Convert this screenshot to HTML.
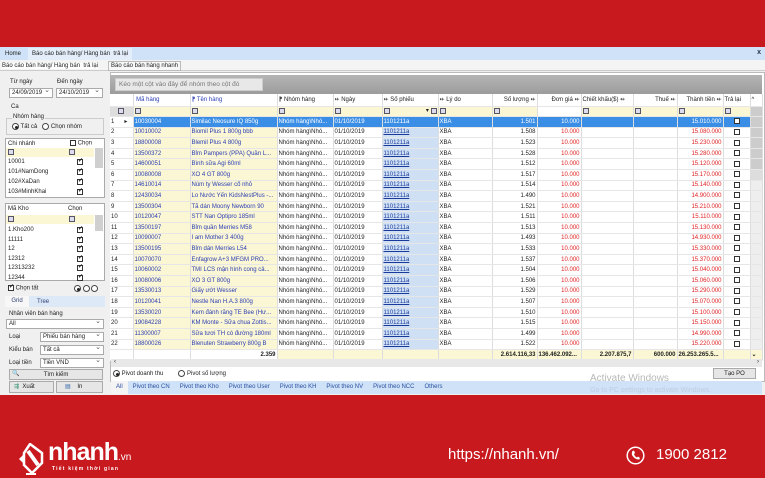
<!DOCTYPE html>
<html><head><meta charset="utf-8"><style>
*{margin:0;padding:0;box-sizing:border-box}
body{width:765px;height:478px;background:#c8191f;position:relative;overflow:hidden;font-family:"Liberation Sans",sans-serif;font-size:6px;color:#222}
.a{position:absolute}
#app{position:absolute;left:0;top:47px;width:765px;height:348px;background:#f0f0f0}
.tab1{position:absolute;top:0;left:0;width:765px;height:13px;background:#cfe2f7}
.t{position:absolute;white-space:nowrap}
.box{position:absolute;background:#fff;border:1px solid #aaa}
.sel{position:absolute;background:#fff;border:1px solid #aaa;height:10px;padding-left:2px;line-height:8px}
.sel:after{content:"⌄";position:absolute;right:2px;top:-2px;font-size:7px;color:#555}
.cb{display:inline-block;width:6px;height:6px;border:1px solid #333;background:#fff;position:relative;vertical-align:middle}
.cb.k:after{content:"✓";position:absolute;left:0;top:-3px;font-size:6px;font-weight:bold}
.pa{position:absolute!important}
.rd{display:inline-block;width:7px;height:7px;border:1px solid #444;border-radius:50%;background:#fff;vertical-align:middle;position:relative}
.rd.on:after{content:"";position:absolute;left:1.5px;top:1.5px;width:3px;height:3px;border-radius:50%;background:#222}
table{border-collapse:collapse;table-layout:fixed}
#g{position:absolute;left:110px;top:47px}
#g td{height:10.6px;max-height:10.6px;border-right:1px solid #ddd;border-bottom:1px solid #e6e6e6;padding:0 1px;white-space:nowrap;overflow:hidden;line-height:8px;font-size:6px}
#g tr.r td{background:#fff}
#g td.y{background:#fbf7d4!important;color:#2a3cb5}
#g td.b{background:#cfe0f5!important;color:#1a3a9a;text-decoration:underline}
#g td.n{text-align:right}
#g td.red{text-align:right;color:#e02020}
#g tr.s td{background:#3a8ee6!important;color:#fff!important;text-decoration:none}
#g tr.s td.w{background:#fff!important;color:#222!important}
.fi{display:inline-block;width:6px;height:6px;border:1px solid #556;background:#dde;vertical-align:middle}
.bt{position:absolute;background:#e6e6e6;border:1px solid #aaa;text-align:center;line-height:10px}
</style></head><body>
<div id="app">
<div class="tab1"><span class="t" style="left:5px;top:4px">Home</span><span class="t" style="left:28px;top:1px;height:12px;background:#e4eefa;padding:3px 4px">Báo cáo bán hàng/ Hàng bán &nbsp;trả lại</span><span class="t" style="right:4px;top:2px;font-weight:bold;font-size:7px;color:#234">x</span></div>
<div class="a" style="left:0;top:13px;width:765px;height:11px;background:#f4f4f4;border-bottom:1px solid #ccc"></div>
<span class="t" style="left:2px;top:16px;background:#fff">Báo cáo bán hàng/ Hàng bán &nbsp;trả lại</span>
<span class="t" style="left:108px;top:14px;border:1px solid #bbb;padding:1px 2px;background:#f8f8f8">Báo cáo bán hàng nhanh</span>
<!-- left panel -->
<span class="t" style="left:10px;top:32px">Từ ngày</span><span class="t" style="left:57px;top:32px">Đến ngày</span>
<div class="sel" style="left:9px;top:41px;width:44px">24/09/2019</div>
<div class="sel" style="left:56px;top:41px;width:47px">24/10/2019</div>
<span class="t" style="left:11px;top:57px">Ca</span>
<div class="a" style="left:6px;top:71px;width:98px;height:17px;border:1px solid #ccc"></div>
<span class="t" style="left:12px;top:67px;background:#f0f0f0;padding:0 1px">Nhóm hàng</span>
<span class="t" style="left:12px;top:76px"><span class="rd on"></span> Tất cả &nbsp;&nbsp;<span class="rd"></span> Chọn nhóm</span>
<div class="box" style="left:5px;top:91px;width:100px;height:60px"></div>
<span class="t" style="left:8px;top:94px">Chi nhánh</span><span class="t" style="left:70px;top:93px"><span class="cb"></span> Chọn</span>
<div class="a" style="left:6px;top:101px;width:88px;height:9px;background:#fbf7d4"><span class="fi" style="position:absolute;left:2px;top:1px"></span><span class="fi" style="position:absolute;left:63px;top:1px"></span></div>
<div class="a" style="left:95px;top:101px;width:8px;height:20px;background:#cfcfcf"></div>
<span class="t" style="left:8px;top:112px">10001</span><span class="cb k pa" style="left:77px;top:112px"></span>
<span class="t" style="left:8px;top:122px">101#NamDong</span><span class="cb k pa" style="left:77px;top:122px"></span>
<span class="t" style="left:8px;top:132px">102#XaDan</span><span class="cb k pa" style="left:77px;top:132px"></span>
<span class="t" style="left:8px;top:142px">103#MinhKhai</span><span class="cb k pa" style="left:77px;top:142px"></span>
<div class="box" style="left:5px;top:156px;width:100px;height:78px"></div>
<span class="t" style="left:8px;top:159px">Mã Kho</span><span class="t" style="left:68px;top:159px">Chọn</span>
<div class="a" style="left:6px;top:168px;width:88px;height:9px;background:#fbf7d4"><span class="fi" style="position:absolute;left:2px;top:1px"></span><span class="fi" style="position:absolute;left:63px;top:1px"></span></div>
<div class="a" style="left:95px;top:168px;width:8px;height:16px;background:#cfcfcf"></div>
<span class="t" style="left:8px;top:180px">1.Kho200</span><span class="cb k pa" style="left:77px;top:180px"></span>
<span class="t" style="left:8px;top:190px">11111</span><span class="cb k pa" style="left:77px;top:190px"></span>
<span class="t" style="left:8px;top:199px">12</span><span class="cb k pa" style="left:77px;top:199px"></span>
<span class="t" style="left:8px;top:209px">12312</span><span class="cb k pa" style="left:77px;top:209px"></span>
<span class="t" style="left:8px;top:218px">12313232</span><span class="cb k pa" style="left:77px;top:218px"></span>
<span class="t" style="left:8px;top:228px">12344</span><span class="cb k pa" style="left:77px;top:228px"></span>
<span class="t" style="left:8px;top:238px"><span class="cb k"></span> Chọn tất</span>
<span class="t" style="left:74px;top:238px"><span class="rd on"></span> <span class="rd"></span> <span class="rd"></span></span>
<div class="a" style="left:5px;top:249px;width:100px;height:11px;background:#dde9f7"></div>
<span class="t" style="left:5px;top:249px;width:24px;height:11px;background:#f7f7f7;text-align:center;line-height:11px;color:#347">Grid</span>
<span class="t" style="left:37px;top:252px;color:#347">Tree</span>
<span class="t" style="left:9px;top:264px">Nhân viên bán hàng</span>
<div class="sel" style="left:6px;top:272px;width:98px">All</div>
<span class="t" style="left:9px;top:287px">Loại</span><div class="sel" style="left:40px;top:285px;width:64px">Phiếu bán hàng</div>
<span class="t" style="left:9px;top:300px">Kiểu bán</span><div class="sel" style="left:40px;top:298px;width:64px">Tất cả</div>
<span class="t" style="left:9px;top:313px">Loại tiền</span><div class="sel" style="left:40px;top:311px;width:64px">Tiền VND</div>
<div class="bt" style="left:9px;top:322px;width:94px;height:11px">Tìm kiếm</div>
<span class="t" style="left:12px;top:323px;color:#2a6">🔍</span>
<div class="bt" style="left:9px;top:334px;width:45px;height:12px;text-align:left;padding-left:4px"><span style="color:#286">⇶</span> &nbsp;Xuất</div>
<div class="bt" style="left:56px;top:334px;width:47px;height:12px;text-align:left;padding-left:8px"><span style="color:#36a">▤</span> &nbsp;&nbsp;&nbsp;In</div>
<!-- grid area -->
<div class="a" style="left:110px;top:25px;width:655px;height:310px;background:#fff;border:1px solid #bbb"></div>
<div class="a" style="left:110px;top:28px;width:652px;height:19px;background:linear-gradient(#b5b5b5,#9c9c9c)"></div>
<div class="a" style="left:115px;top:31px;width:148px;height:13px;background:#e8e8e8;border:1px solid #ccc;line-height:11px;padding-left:3px;color:#777;font-size:6.5px">Kéo một cột vào đây để nhóm theo cột đó</div>
<table id="g" style="width:652px">
<colgroup><col style="width:23px"><col style="width:57px"><col style="width:87px"><col style="width:56px"><col style="width:49px"><col style="width:56px"><col style="width:54px"><col style="width:45px"><col style="width:44px"><col style="width:52px"><col style="width:44px"><col style="width:46px"><col style="width:27px"><col style="width:12px"></colgroup>
<tr style="background:#fff"><td style="height:12px"></td><td style="color:#2a3cb5">&nbsp;Mã hàng</td><td style="color:#2a3cb5">⁋ Tên hàng</td><td>⁋ Nhóm hàng</td><td>⇷ Ngày</td><td>⇷ Số phiếu</td><td>⇷ Lý do</td><td class="n">Số lượng ⇷</td><td class="n">Đơn giá ⇷</td><td>Chiết khấu($) ⇷</td><td class="n">Thuế ⇷</td><td class="n">Thành tiền ⇷</td><td>Trả lại</td><td>^</td></tr>
<tr style="background:#fbf7d4"><td style="background:#ddd;text-align:center"><span class="fi"></span></td><td><span class="fi"></span></td><td><span class="fi"></span></td><td><span class="fi"></span></td><td><span class="fi"></span></td><td><span class="fi"></span> <span style="float:right">▾ <span class="fi"></span></span></td><td><span class="fi"></span></td><td><span class="fi"></span></td><td style="background:#fff"></td><td><span class="fi"></span></td><td><span class="fi"></span></td><td><span class="fi"></span></td><td><span class="fi"></span></td><td style="background:#ccc"></td></tr>
<tr class="r s"><td class="w">1 &nbsp;&nbsp;&nbsp;&nbsp;&nbsp;▸</td><td class="y">10030004</td><td class="y">Similac Neosure IQ 850g</td><td>Nhóm hàng\Nhó...</td><td>01/10/2019</td><td class="b">1101211a</td><td>XBA</td><td class="n">1.501</td><td class="red">10.000</td><td></td><td></td><td class="red">15.010.000</td><td style="text-align:center"><span class="cb"></span></td><td style="background:#ccc!important"></td></tr>
<tr class="r"><td>2</td><td class="y">10010002</td><td class="y">Biomil Plus 1 800g bbb</td><td>Nhóm hàng\Nhó...</td><td>01/10/2019</td><td class="b">1101211a</td><td>XBA</td><td class="n">1.508</td><td class="red">10.000</td><td></td><td></td><td class="red">15.080.000</td><td style="text-align:center"><span class="cb"></span></td><td style="background:#ccc!important"></td></tr>
<tr class="r"><td>3</td><td class="y">18800008</td><td class="y">Blemil Plus 4 800g</td><td>Nhóm hàng\Nhó...</td><td>01/10/2019</td><td class="b">1101211a</td><td>XBA</td><td class="n">1.523</td><td class="red">10.000</td><td></td><td></td><td class="red">15.230.000</td><td style="text-align:center"><span class="cb"></span></td><td style="background:#ccc!important"></td></tr>
<tr class="r"><td>4</td><td class="y">13500372</td><td class="y">Bỉm Pampers (PPA) Quần L...</td><td>Nhóm hàng\Nhó...</td><td>01/10/2019</td><td class="b">1101211a</td><td>XBA</td><td class="n">1.528</td><td class="red">10.000</td><td></td><td></td><td class="red">15.280.000</td><td style="text-align:center"><span class="cb"></span></td><td style="background:#ccc!important"></td></tr>
<tr class="r"><td>5</td><td class="y">14600051</td><td class="y">Bình sữa Agi 60ml</td><td>Nhóm hàng\Nhó...</td><td>01/10/2019</td><td class="b">1101211a</td><td>XBA</td><td class="n">1.512</td><td class="red">10.000</td><td></td><td></td><td class="red">15.120.000</td><td style="text-align:center"><span class="cb"></span></td><td style="background:#ccc!important"></td></tr>
<tr class="r"><td>6</td><td class="y">10080008</td><td class="y">XO 4 GT 800g</td><td>Nhóm hàng\Nhó...</td><td>01/10/2019</td><td class="b">1101211a</td><td>XBA</td><td class="n">1.517</td><td class="red">10.000</td><td></td><td></td><td class="red">15.170.000</td><td style="text-align:center"><span class="cb"></span></td><td style="background:#ddd!important"></td></tr>
<tr class="r"><td>7</td><td class="y">14610014</td><td class="y">Núm ty Wesser cổ nhỏ</td><td>Nhóm hàng\Nhó...</td><td>01/10/2019</td><td class="b">1101211a</td><td>XBA</td><td class="n">1.514</td><td class="red">10.000</td><td></td><td></td><td class="red">15.140.000</td><td style="text-align:center"><span class="cb"></span></td><td style="background:#eee!important"></td></tr>
<tr class="r"><td>8</td><td class="y">12430034</td><td class="y">Lo Nước Yến KidsNestPlus -...</td><td>Nhóm hàng\Nhó...</td><td>01/10/2019</td><td class="b">1101211a</td><td>XBA</td><td class="n">1.490</td><td class="red">10.000</td><td></td><td></td><td class="red">14.900.000</td><td style="text-align:center"><span class="cb"></span></td><td style="background:#eee!important"></td></tr>
<tr class="r"><td>9</td><td class="y">13500304</td><td class="y">Tã dán Moony Newborn 90</td><td>Nhóm hàng\Nhó...</td><td>01/10/2019</td><td class="b">1101211a</td><td>XBA</td><td class="n">1.521</td><td class="red">10.000</td><td></td><td></td><td class="red">15.210.000</td><td style="text-align:center"><span class="cb"></span></td><td style="background:#eee!important"></td></tr>
<tr class="r"><td>10</td><td class="y">10120047</td><td class="y">STT Nan Optipro 185ml</td><td>Nhóm hàng\Nhó...</td><td>01/10/2019</td><td class="b">1101211a</td><td>XBA</td><td class="n">1.511</td><td class="red">10.000</td><td></td><td></td><td class="red">15.110.000</td><td style="text-align:center"><span class="cb"></span></td><td style="background:#eee!important"></td></tr>
<tr class="r"><td>11</td><td class="y">13500197</td><td class="y">Bỉm quần Merries M58</td><td>Nhóm hàng\Nhó...</td><td>01/10/2019</td><td class="b">1101211a</td><td>XBA</td><td class="n">1.513</td><td class="red">10.000</td><td></td><td></td><td class="red">15.130.000</td><td style="text-align:center"><span class="cb"></span></td><td style="background:#eee!important"></td></tr>
<tr class="r"><td>12</td><td class="y">10090007</td><td class="y">I am Mother 3 400g</td><td>Nhóm hàng\Nhó...</td><td>01/10/2019</td><td class="b">1101211a</td><td>XBA</td><td class="n">1.493</td><td class="red">10.000</td><td></td><td></td><td class="red">14.930.000</td><td style="text-align:center"><span class="cb"></span></td><td style="background:#eee!important"></td></tr>
<tr class="r"><td>13</td><td class="y">13500195</td><td class="y">Bỉm dán Merries L54</td><td>Nhóm hàng\Nhó...</td><td>01/10/2019</td><td class="b">1101211a</td><td>XBA</td><td class="n">1.533</td><td class="red">10.000</td><td></td><td></td><td class="red">15.330.000</td><td style="text-align:center"><span class="cb"></span></td><td style="background:#eee!important"></td></tr>
<tr class="r"><td>14</td><td class="y">10070070</td><td class="y">Enfagrow A+3 MFGM PRO...</td><td>Nhóm hàng\Nhó...</td><td>01/10/2019</td><td class="b">1101211a</td><td>XBA</td><td class="n">1.537</td><td class="red">10.000</td><td></td><td></td><td class="red">15.370.000</td><td style="text-align:center"><span class="cb"></span></td><td style="background:#eee!important"></td></tr>
<tr class="r"><td>15</td><td class="y">10060002</td><td class="y">TMI LCS mận hình cong cả...</td><td>Nhóm hàng\Nhó...</td><td>01/10/2019</td><td class="b">1101211a</td><td>XBA</td><td class="n">1.504</td><td class="red">10.000</td><td></td><td></td><td class="red">15.040.000</td><td style="text-align:center"><span class="cb"></span></td><td style="background:#eee!important"></td></tr>
<tr class="r"><td>16</td><td class="y">10080006</td><td class="y">XO 3 GT 800g</td><td>Nhóm hàng\Nhó...</td><td>01/10/2019</td><td class="b">1101211a</td><td>XBA</td><td class="n">1.506</td><td class="red">10.000</td><td></td><td></td><td class="red">15.060.000</td><td style="text-align:center"><span class="cb"></span></td><td style="background:#eee!important"></td></tr>
<tr class="r"><td>17</td><td class="y">13530013</td><td class="y">Giấy ướt Wesser</td><td>Nhóm hàng\Nhó...</td><td>01/10/2019</td><td class="b">1101211a</td><td>XBA</td><td class="n">1.529</td><td class="red">10.000</td><td></td><td></td><td class="red">15.290.000</td><td style="text-align:center"><span class="cb"></span></td><td style="background:#eee!important"></td></tr>
<tr class="r"><td>18</td><td class="y">10120041</td><td class="y">Nestle Nan H.A.3 800g</td><td>Nhóm hàng\Nhó...</td><td>01/10/2019</td><td class="b">1101211a</td><td>XBA</td><td class="n">1.507</td><td class="red">10.000</td><td></td><td></td><td class="red">15.070.000</td><td style="text-align:center"><span class="cb"></span></td><td style="background:#eee!important"></td></tr>
<tr class="r"><td>19</td><td class="y">13530020</td><td class="y">Kem đánh răng TE Bee (Hư...</td><td>Nhóm hàng\Nhó...</td><td>01/10/2019</td><td class="b">1101211a</td><td>XBA</td><td class="n">1.510</td><td class="red">10.000</td><td></td><td></td><td class="red">15.100.000</td><td style="text-align:center"><span class="cb"></span></td><td style="background:#eee!important"></td></tr>
<tr class="r"><td>20</td><td class="y">19084228</td><td class="y">KM Monte - Sữa chua Zottis...</td><td>Nhóm hàng\Nhó...</td><td>01/10/2019</td><td class="b">1101211a</td><td>XBA</td><td class="n">1.515</td><td class="red">10.000</td><td></td><td></td><td class="red">15.150.000</td><td style="text-align:center"><span class="cb"></span></td><td style="background:#eee!important"></td></tr>
<tr class="r"><td>21</td><td class="y">11300007</td><td class="y">Sữa tươi TH có đường 180ml</td><td>Nhóm hàng\Nhó...</td><td>01/10/2019</td><td class="b">1101211a</td><td>XBA</td><td class="n">1.499</td><td class="red">10.000</td><td></td><td></td><td class="red">14.990.000</td><td style="text-align:center"><span class="cb"></span></td><td style="background:#eee!important"></td></tr>
<tr class="r"><td>22</td><td class="y">18800026</td><td class="y">Blenuten Strawberry 800g B</td><td>Nhóm hàng\Nhó...</td><td>01/10/2019</td><td class="b">1101211a</td><td>XBA</td><td class="n">1.522</td><td class="red">10.000</td><td></td><td></td><td class="red">15.220.000</td><td style="text-align:center"><span class="cb"></span></td><td style="background:#eee!important"></td></tr>
<tr style="background:#fbf7d4;font-weight:bold"><td style="background:#fff"></td><td style="background:#fff"></td><td class="n" style="background:#fff;font-weight:bold">2.359</td><td></td><td></td><td></td><td></td><td class="n" style="font-weight:bold">2.614.116,33</td><td style="font-weight:bold;overflow:hidden">136.462.092...</td><td class="n" style="font-weight:bold">2.207.875,7</td><td class="n" style="font-weight:bold">600.000</td><td style="font-weight:bold">26.253.265.5...</td><td></td><td>⌄</td></tr>
</table>
<div class="a" style="left:111px;top:312px;width:651px;height:8px;background:#e8e8e8"><span class="t" style="left:3px;top:0">‹</span><span class="t" style="right:3px;top:0">›</span></div>
<span class="t" style="left:113px;top:323px"><span class="rd on"></span> Pivot doanh thu &nbsp;&nbsp;&nbsp;&nbsp;&nbsp;&nbsp;&nbsp;&nbsp;<span class="rd"></span> Pivot số lượng</span>
<div class="bt" style="left:713px;top:321px;width:43px;height:11px">Tạo PO</div>
<span class="t" style="left:590px;top:326px;font-size:10px;color:#b8b8b8">Activate Windows</span>
<div class="a" style="left:111px;top:334px;width:651px;height:13px;background:#cfe2f7;color:#2a4fa0;line-height:13px;white-space:nowrap"><span style="background:#f4f4f4;padding:0 5px;display:inline-block">All</span>&nbsp;&nbsp; Pivot theo CN &nbsp;&nbsp;&nbsp;&nbsp; Pivot theo Kho &nbsp;&nbsp;&nbsp;&nbsp; Pivot theo User &nbsp;&nbsp;&nbsp;&nbsp; Pivot theo KH &nbsp;&nbsp;&nbsp;&nbsp; Pivot theo NV &nbsp;&nbsp;&nbsp;&nbsp; Pivot theo NCC &nbsp;&nbsp;&nbsp;&nbsp; Others</div>
<span class="t" style="left:590px;top:340px;font-size:7px;color:#c0cce0">Go to PC settings to activate Windows.</span>
</div>
<!-- footer -->
<svg class="a" style="left:18px;top:443px" width="30" height="33" viewBox="0 0 30 33"><path d="M12 1 L24 10 L24 20 L14 30 L6 22 L6 10 Z" fill="none" stroke="#fff" stroke-width="2.5"/><path d="M10 8 L20 22" stroke="#fff" stroke-width="4"/><path d="M1 16 L6 11 L6 21 Z" fill="#fff"/><path d="M8 30 h10 v2 h-10z" fill="#fff"/></svg>
<span class="t" style="left:48px;top:438px;font-size:25px;font-weight:bold;color:#fff;letter-spacing:-1px">nhanh</span><span class="t" style="left:118px;top:452px;font-size:10px;color:#fff">.vn</span>
<span class="t" style="left:52px;top:466px;font-size:5px;color:#fff;letter-spacing:1.2px;font-weight:bold">Tiết kiệm thời gian</span>
<span class="t" style="left:448px;top:446px;font-size:15px;color:#fff">https://nhanh.vn/</span>
<svg class="a" style="left:626px;top:446px" width="19" height="19" viewBox="0 0 19 19"><circle cx="9.5" cy="9.5" r="8.3" fill="none" stroke="#fff" stroke-width="1.5"/><path d="M6.5 5 L8 4.5 L9 7 L8 8 Q8.5 10.5 11 11.5 L12 10.5 L14 12 L13.3 13.5 Q9 14 6 9 Q5.5 6.5 6.5 5Z" fill="#fff"/></svg>
<span class="t" style="left:656px;top:446px;font-size:15px;color:#fff">1900 2812</span>
</body></html>
